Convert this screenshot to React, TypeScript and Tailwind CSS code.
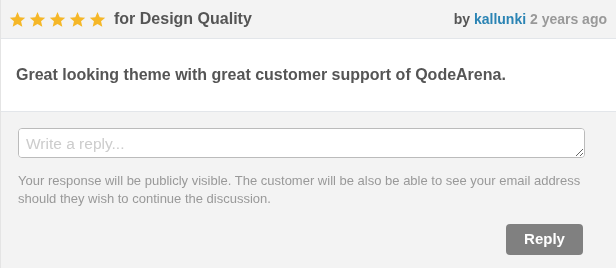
import React from "react";

const Star = () => (
  <svg width="17" height="17" viewBox="0 0 24 24" className="shrink-0">
    <path
      d="M12 1.5l3.1 7.2 7.8.7-5.9 5.2 1.8 7.7L12 18.2l-6.8 4.1 1.8-7.7-5.9-5.2 7.8-.7z"
      fill="#f5b728"
    />
  </svg>
);

export default function App() {
  return (
    <div
      className="w-[616px] h-[268px] bg-[#f3f3f3] border-l border-[#e4e4e4] overflow-hidden"
      style={{ fontFamily: '"Liberation Sans", Arial, sans-serif' }}
    >
      <div className="h-[39px] flex items-center justify-between pl-[8px] pr-[9px] border-b border-[#e3e6ea]">
        <div className="flex items-center">
          <div className="flex items-center gap-[3px]">
            <Star />
            <Star />
            <Star />
            <Star />
            <Star />
          </div>
          <span className="ml-[8px] text-[16px] font-bold text-[#555]">for Design Quality</span>
        </div>
        <div className="text-[14px] font-bold">
          <span className="text-[#555]">by </span>
          <span className="text-[#2b84b4]">kallunki</span>
          <span className="text-[#999]"> 2 years ago</span>
        </div>
      </div>
      <div className="h-[73px] bg-white border-b border-[#e3e6ea] flex items-center pl-[15px]">
        <p className="text-[16px] font-bold text-[#555]">
          Great looking theme with great customer support of QodeArena.
        </p>
      </div>
      <div className="pt-[16px] px-[17px]">
        <textarea
          placeholder="Write a reply..."
          className="block w-[567px] h-[30px] border border-[#bbb] rounded-[4px] bg-white px-[7px] py-[3px] text-[15.5px] placeholder:text-[#ccc] resize-y"
        />
        <p className="mt-[14px] text-[13px] leading-[18px] text-[#999]">
          Your response will be publicly visible. The customer will be also be able to see your email address
          should they wish to continue the discussion.
        </p>
        <div className="flex justify-end mt-[16px] pr-[16px]">
          <button className="w-[77px] h-[31px] rounded-[4px] bg-[#808080] text-white font-bold text-[15px]">
            Reply
          </button>
        </div>
      </div>
    </div>
  );
}
